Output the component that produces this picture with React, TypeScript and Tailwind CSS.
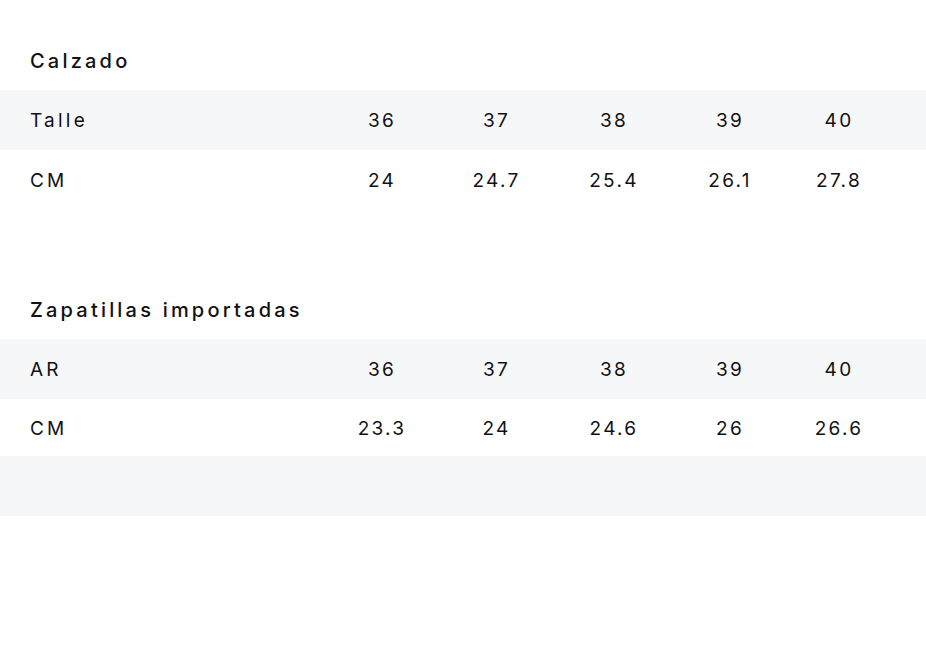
import React from "react";

const cols = "grid grid-cols-[326px_112px_117px_118px_114px_104px_1fr] items-center";

type Row = { label: string; values: string[]; gray?: boolean; h?: string };

const SizeTable = ({ title, rows }: { title: string; rows: Row[] }) => {
  return (
    <section>
      <h2 className="mb-[14px] pt-[1px] pl-[30px] text-[20px] leading-[30px] font-medium tracking-[0.16em] text-[#111]">
        {title}
      </h2>
      <div>
        {rows.map((row, i) => (
          <div
            key={i}
            className={`${cols} ${row.h ?? "h-[60px] pt-[2px]"} ${row.gray ? "bg-[#f6f7f9]" : "bg-white"}`}
          >
            <span className="pl-[30px] tracking-[0.17em]">{row.label}</span>
            {row.values.map((v, j) => (
              <span key={j} className="text-center">
                {v}
              </span>
            ))}
          </div>
        ))}
      </div>
    </section>
  );
};

export default function App() {
  return (
    <div
      className="min-h-[666px] w-full bg-white pt-[45px] text-[19px] tracking-[0.12em] text-[#111]"
      style={{ fontFamily: "Inter, 'Noto Sans', sans-serif" }}
    >
      <SizeTable
        title="Calzado"
        rows={[
          { label: "Talle", values: ["36", "37", "38", "39", "40"], gray: true },
          { label: "CM", values: ["24", "24.7", "25.4", "26.1", "27.8"] },
        ]}
      />
      <div className="h-[84px]" />
      <SizeTable
        title="Zapatillas importadas"
        rows={[
          { label: "AR", values: ["36", "37", "38", "39", "40"], gray: true },
          { label: "CM", values: ["23.3", "24", "24.6", "26", "26.6"], h: "h-[57px] pt-[4px]" },
          { label: "", values: ["", "", "", "", ""], gray: true },
        ]}
      />
    </div>
  );
}
